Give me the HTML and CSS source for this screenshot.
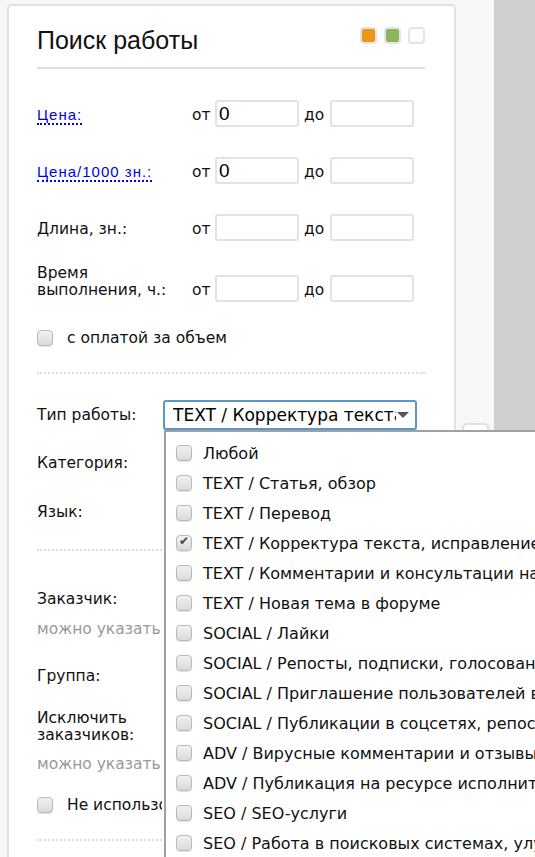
FILE: index.html
```html
<!DOCTYPE html>
<html lang="ru">
<head>
    <meta charset="UTF-8">
    <meta name="viewport" content="width=device-width, initial-scale=1.0">
    <title>Поиск работы</title>
    <link rel="stylesheet" href="styles.css">
</head>
<body>
    <div class="page">
        <div class="main">
            <div class="card">
                <div class="card-head">
                    <h1>Поиск работы</h1>
                    <div class="swatches">
                        <span class="swatch swatch-orange"></span>
                        <span class="swatch swatch-green"></span>
                        <span class="swatch swatch-white"></span>
                    </div>
                </div>

                <div class="range-row first">
                    <span class="range-label"><a href="#" class="link">Цена:</a></span>
                    <span class="range-word">от</span>
                    <input type="text" class="range-input" value="0">
                    <span class="range-word to">до</span>
                    <input type="text" class="range-input">
                </div>
                <div class="range-row">
                    <span class="range-label"><a href="#" class="link">Цена/1000 зн.:</a></span>
                    <span class="range-word">от</span>
                    <input type="text" class="range-input" value="0">
                    <span class="range-word to">до</span>
                    <input type="text" class="range-input">
                </div>
                <div class="range-row">
                    <span class="range-label">Длина, зн.:</span>
                    <span class="range-word">от</span>
                    <input type="text" class="range-input">
                    <span class="range-word to">до</span>
                    <input type="text" class="range-input">
                </div>
                <div class="range-row tall">
                    <span class="range-label">Время<br>выполнения, ч.:</span>
                    <span class="range-word">от</span>
                    <input type="text" class="range-input">
                    <span class="range-word to">до</span>
                    <input type="text" class="range-input">
                </div>

                <label class="check-row volume-row">
                    <input type="checkbox" class="check">
                    <span>с оплатой за объем</span>
                </label>

                <div class="dots sep-1"></div>

                <div class="field-row type-row">
                    <span class="field-label">Тип работы:</span>
                    <div class="select-wrap">
                        <div class="fake-select">
                            <span class="fake-select-text">TEXT / Корректура текста, исправление</span>
                            <span class="fake-select-arrow"></span>
                        </div>
                        <ul class="dropdown">
                            <li><input type="checkbox" class="check"> Любой</li>
                            <li><input type="checkbox" class="check"> TEXT / Статья, обзор</li>
                            <li><input type="checkbox" class="check"> TEXT / Перевод</li>
                            <li><input type="checkbox" class="check" checked> TEXT / Корректура текста, исправление ошибок</li>
                            <li><input type="checkbox" class="check"> TEXT / Комментарии и консультации на форумах</li>
                            <li><input type="checkbox" class="check"> TEXT / Новая тема в форуме</li>
                            <li><input type="checkbox" class="check"> SOCIAL / Лайки</li>
                            <li><input type="checkbox" class="check"> SOCIAL / Репосты, подписки, голосования</li>
                            <li><input type="checkbox" class="check"> SOCIAL / Приглашение пользователей в группы</li>
                            <li><input type="checkbox" class="check"> SOCIAL / Публикации в соцсетях, репосты</li>
                            <li><input type="checkbox" class="check"> ADV / Вирусные комментарии и отзывы</li>
                            <li><input type="checkbox" class="check"> ADV / Публикация на ресурсе исполнителя</li>
                            <li><input type="checkbox" class="check"> SEO / SEO-услуги</li>
                            <li><input type="checkbox" class="check"> SEO / Работа в поисковых системах, улучшение</li>
                        </ul>
                    </div>
                </div>

                <div class="field-row cat-row">
                    <span class="field-label">Категория:</span>
                </div>
                <div class="field-row lang-row">
                    <span class="field-label">Язык:</span>
                </div>

                <div class="dots sep-2"></div>

                <div class="field-row client-row">
                    <span class="field-label">Заказчик:</span>
                </div>
                <div class="hint hint-1">можно указать несколько</div>

                <div class="field-row group-row">
                    <span class="field-label">Группа:</span>
                </div>

                <div class="field-row exclude-row">
                    <span class="field-label">Исключить<br>заказчиков:</span>
                </div>
                <div class="hint hint-2">можно указать несколько</div>

                <label class="check-row unused-row">
                    <input type="checkbox" class="check">
                    <span class="clip">Не использовать</span>
                </label>

                <div class="dots sep-3"></div>
            </div>
            <div class="side-strip">
                <div class="mini-btn"></div>
            </div>
        </div>
        <div class="aside"></div>
    </div>
</body>
</html>
```

FILE: styles.css
```css
* {
    box-sizing: border-box;
}

html, body {
    margin: 0;
    height: 100%;
    overflow: hidden;
}

body {
    font-family: 'DejaVu Sans', Verdana, sans-serif;
    font-size: 15.5px;
    color: #111;
    background-color: #f7f7f7;
}

.page {
    display: flex;
    height: 100%;
}

.main {
    display: flex;
    width: 494px;
    flex-shrink: 0;
    background-color: #f7f7f7;
}

.aside {
    flex: 1;
    background-color: #cfcfcf;
}

/* карточка поиска */
.card {
    width: 449px;
    margin: 4px 0 0 7px;
    padding: 18px 29px 0 28px;
    min-height: 900px;
    background-color: white;
    border: 2px solid #e2e2e2;
    border-radius: 5px;
}

.card-head {
    display: flex;
    justify-content: space-between;
    align-items: flex-start;
    padding-bottom: 11px;
    border-bottom: 2px solid #dedede;
}

h1 {
    margin: 0;
    font-family: 'Liberation Sans', Arial, sans-serif;
    font-size: 25px;
    font-weight: normal;
    line-height: 32px;
    color: #111;
}

.swatches {
    display: flex;
    gap: 7px;
    margin-top: 3px;
}

.swatch {
    width: 17px;
    height: 17px;
    border: 2px solid #e4e4e4;
    border-radius: 4px;
}

.swatch-orange {
    background-color: #ec961a;
}

.swatch-green {
    background-color: #8db65a;
}

.swatch-white {
    background-color: white;
}

/* диапазоны */
.range-row {
    display: flex;
    align-items: flex-end;
    margin-top: 30px;
}

.range-row.first {
    margin-top: 31px;
}

.range-row.tall {
    margin-top: 24px;
}

.range-label {
    width: 155px;
    flex-shrink: 0;
    line-height: 17px;
    padding-bottom: 3px;
}

.link {
    font-family: 'Liberation Sans', Arial, sans-serif;
    font-size: 15px;
    letter-spacing: 1px;
    color: #0000ee;
    text-decoration: none;
    border-bottom: 2px dotted #0000ee;
}

.range-word {
    width: 23px;
    flex-shrink: 0;
    line-height: 17px;
    padding-bottom: 3px;
}

.range-word.to {
    width: 26px;
    margin-left: 5px;
}

.range-input {
    width: 84px;
    height: 27px;
    padding: 0 2px;
    border: 2px solid #e2e2e2;
    border-radius: 3px;
    font-family: 'Liberation Sans', Arial, sans-serif;
    font-size: 19px;
    color: #000;
    background-color: white;
}

/* чекбоксы */
.check {
    -webkit-appearance: none;
    appearance: none;
    position: relative;
    flex-shrink: 0;
    width: 16px;
    height: 16px;
    margin: 0;
    border: 1px solid #b9b9b9;
    border-radius: 4px;
    background: linear-gradient(#f2f2f2, #dadada);
    box-shadow: 0 1px 1px rgba(0,0,0,0.12);
}

.check:checked::after {
    content: "✔";
    position: absolute;
    left: 2px;
    top: -2px;
    font-size: 12px;
    color: #444;
}

.check-row {
    display: flex;
    align-items: center;
    gap: 14px;
    line-height: 20px;
}

.volume-row {
    margin-top: 26px;
}

.dots {
    border-top: 2px dotted #dcdcdc;
}

.sep-1 {
    margin-top: 24px;
}

/* поля выбора */
.field-row {
    display: flex;
    align-items: center;
    height: 30px;
}

.field-label {
    width: 126px;
    flex-shrink: 0;
    line-height: 17px;
}

.type-row {
    margin-top: 26px;
}

.select-wrap {
    position: relative;
    z-index: 2;
}

.fake-select {
    display: flex;
    align-items: center;
    width: 254px;
    height: 30px;
    padding: 0 6px 0 8px;
    border: 2px solid #5d97c4;
    border-radius: 3px;
    background-color: white;
    font-size: 17px;
    color: #000;
}

.fake-select-text {
    flex: 1;
    overflow: hidden;
    white-space: nowrap;
}

.fake-select-arrow {
    width: 0;
    height: 0;
    margin-left: 1px;
    border-left: 6px solid transparent;
    border-right: 6px solid transparent;
    border-top: 6px solid #555;
}

/* раскрытый список */
.dropdown {
    position: absolute;
    top: 30px;
    left: 1px;
    width: 420px;
    margin: 0;
    padding: 6px 0 0 10px;
    list-style: none;
    background-color: white;
    border-top: 2px solid #a0a0a0;
    border-left: 2px solid #a0a0a0;
    font-size: 16px;
}

.dropdown li {
    display: flex;
    align-items: center;
    gap: 11px;
    height: 30px;
    white-space: nowrap;
    color: #111;
}

.cat-row {
    margin-top: 18px;
}

.lang-row {
    margin-top: 19px;
}

.sep-2 {
    margin-top: 22px;
}

.client-row {
    margin-top: 33px;
}

.hint {
    width: 126px;
    overflow: hidden;
    white-space: nowrap;
    line-height: 20px;
    color: #999;
}

.hint-1 {
    margin-top: 5px;
}

.group-row {
    margin-top: 22px;
}

.exclude-row {
    margin-top: 19px;
    height: 34px;
}

.hint-2 {
    margin-top: 10px;
}

.unused-row {
    margin-top: 21px;
}

.clip {
    width: 95px;
    overflow: hidden;
    white-space: nowrap;
}

.sep-3 {
    margin-top: 24px;
}

.side-strip {
    flex: 1;
    padding: 423px 5px 0 6px;
}

.mini-btn {
    height: 22px;
    border: 2px solid #e0e0e0;
    border-radius: 5px;
    background-color: white;
}
```
